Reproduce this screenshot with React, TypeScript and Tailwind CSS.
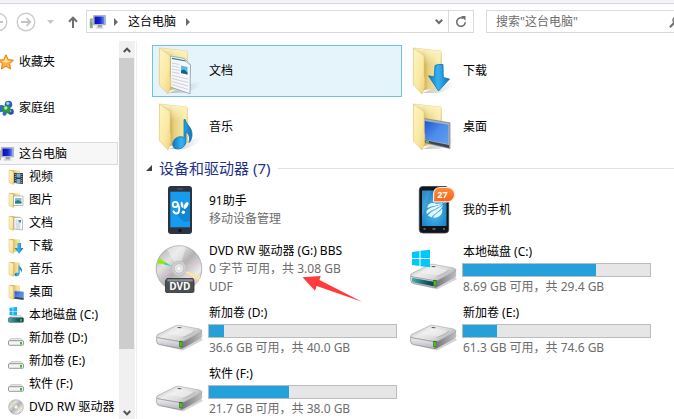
import type { ReactNode } from "react"

type Kind = "video" | "picture" | "document" | "download" | "music" | "desktop"

// Shared gradients, referenced by id from every icon
function IconDefs() {
  return (
    <svg className="absolute size-0" aria-hidden="true">
      <defs>
        <linearGradient id="flap" x1="0" x2="1" y1="0" y2="1">
          <stop offset="0" stopColor="#fdf5c4" />
          <stop offset="0.6" stopColor="#fae9a2" />
          <stop offset="1" stopColor="#ecd07a" />
        </linearGradient>
        <linearGradient id="back" x1="0" x2="1" y1="0" y2="0">
          <stop offset="0.36" stopColor="#c8a850" />
          <stop offset="0.52" stopColor="#e6cf7c" />
          <stop offset="0.85" stopColor="#f5e8a2" />
          <stop offset="1" stopColor="#eddc8c" />
        </linearGradient>
        <linearGradient id="backTop" x1="0" x2="0" y1="0" y2="1">
          <stop offset="0" stopColor="#fdf6c6" />
          <stop offset="0.4" stopColor="#fdf6c6" stopOpacity="0" />
        </linearGradient>
        <linearGradient id="blue" x1="0" x2="1" y1="0" y2="0">
          <stop offset="0" stopColor="#1076be" />
          <stop offset="0.45" stopColor="#35b2f2" />
          <stop offset="1" stopColor="#1273b8" />
        </linearGradient>
        <linearGradient id="screen" x1="0" x2="1" y1="0" y2="1">
          <stop offset="0" stopColor="#1f55cc" />
          <stop offset="0.5" stopColor="#4c8cec" />
          <stop offset="1" stopColor="#5f9ff0" />
        </linearGradient>
        <linearGradient id="pc" x1="0" x2="1" y1="0" y2="0">
          <stop offset="0" stopColor="#0a12a8" />
          <stop offset="0.55" stopColor="#1626d8" />
          <stop offset="1" stopColor="#6f8cf5" />
        </linearGradient>
        <linearGradient id="metal" x1="0" x2="1" y1="0" y2="0.6">
          <stop offset="0" stopColor="#a4a4a6" />
          <stop offset="0.4" stopColor="#ececec" />
          <stop offset="0.7" stopColor="#dcdcdd" />
          <stop offset="1" stopColor="#a9a9ab" />
        </linearGradient>
        <linearGradient id="front" x1="0" x2="0" y1="0" y2="1">
          <stop offset="0" stopColor="#f4f4f8" />
          <stop offset="1" stopColor="#b4b4bc" />
        </linearGradient>
        <linearGradient id="side" x1="0" x2="1" y1="0" y2="0">
          <stop offset="0" stopColor="#6e6e72" />
          <stop offset="1" stopColor="#c0c0c4" />
        </linearGradient>
        <linearGradient id="teal" x1="0" x2="1" y1="0" y2="0">
          <stop offset="0" stopColor="#4cb0a4" />
          <stop offset="0.6" stopColor="#15616f" />
          <stop offset="1" stopColor="#123f4a" />
        </linearGradient>
        <linearGradient id="disc" x1="0" x2="1" y1="0" y2="1">
          <stop offset="0" stopColor="#a4a4a4" />
          <stop offset="0.3" stopColor="#e2e2e2" />
          <stop offset="0.5" stopColor="#b2b2b2" />
          <stop offset="0.75" stopColor="#ececec" />
          <stop offset="1" stopColor="#a0a0a0" />
        </linearGradient>
        <radialGradient id="phone" cx="0.5" cy="0.6" r="0.7">
          <stop offset="0" stopColor="#4cc0f6" />
          <stop offset="1" stopColor="#1478bd" />
        </radialGradient>
        <linearGradient id="badge" x1="0" x2="0" y1="0" y2="1">
          <stop offset="0" stopColor="#ff8a3a" />
          <stop offset="1" stopColor="#f8641a" />
        </linearGradient>
        <linearGradient id="shadow" x1="0" x2="1" y1="0" y2="0">
          <stop offset="0" stopColor="#8a8a8a" stopOpacity="0.5" />
          <stop offset="1" stopColor="#8a8a8a" stopOpacity="0" />
        </linearGradient>
      </defs>
    </svg>
  )
}

function FolderIcon({ kind }: { kind: Kind }) {
  return (
    <svg viewBox="0 0 48 48" className="size-12 shrink-0" aria-hidden="true">
      <path d="M14 46 L32 38 L46 34 L44 40 L30 46 Z" fill="url(#shadow)" />
      <path d="M4.500 1 L31.500 4 Q32.500 4.200 32.500 5.500 V40 L15 43 Z" fill="url(#back)" stroke="#dfc674" strokeWidth="0.6" />
      <path d="M4.500 1 L31.500 4 Q32.500 4.200 32.500 5.500 V40 L15 43 Z" fill="url(#backTop)" />
      <path d="M29 6.500 L31 7 V38 L29 38.500 Z" fill="#fcf3ba" opacity="0.6" />
      {kind === "document" && (
        <g>
          <path d="M15.500 9 L29.500 11.500 L35.500 18 L35 46.800 L15.500 40 Z" fill="#f6f7fb" stroke="#8f98a8" strokeWidth="0.8" />
          <path d="M17 11.300 L31 14" stroke="#2b7f86" strokeWidth="1.200" />
          <path d="M26 18.500 L32.500 20 V27.500 L26 26 Z" fill="#5cbbe4" />
          <path d="M26 23.500 L29 22.500 L32.500 25.500 V27.500 L26 26 Z" fill="#17608c" />
          <path
            d="M17 16 l7.500 1.500 M17 19 l7.500 1.500 M17 22 l7.500 1.500 M17 25 l7.500 1.500 M17 28.500 l16 3.500 M17 31.500 l16 4 M17 34.500 l16 4.500 M17 37.500 l16 5"
            stroke="#cfd1d8"
            strokeWidth="1"
          />
          <path d="M29.500 11.500 Q30.500 16 35.500 18" fill="#dfe3ea" stroke="#8f98a8" strokeWidth="0.5" />
        </g>
      )}
      {kind === "desktop" && (
        <g>
          <path d="M15 15.500 L41 19.800 V45.500 L15 39.500 Z" fill="#a9aeb8" stroke="#747c8a" strokeWidth="0.7" />
          <path d="M15.500 18 L39.300 21.800 V41 L15.500 36.500 Z" fill="url(#screen)" />
          <path d="M15.500 37 L40 42 V45 L15.500 39.300 Z" fill="#3e4654" />
          <path d="M17 37.800 l3 0.700 v1.400 l-3 -0.700 Z" fill="#7ec94b" />
        </g>
      )}
      <path d="M4.500 1 L14.500 8 Q15.200 8.600 15.200 10 V29.500 L15.800 31 V40 L13 47 L5 38.500 Q4.300 37.800 4.300 36.500 Z" fill="url(#flap)" stroke="#dcc06c" strokeWidth="0.6" />
      {kind === "download" && (
        <path
          d="M26 18.500 Q29 16.800 34 17.500 L34.300 30.500 L40.500 32 L29.500 44 L19.500 28.800 L25.200 30 Z"
          fill="url(#blue)"
          stroke="#1272b4"
          strokeWidth="0.8"
          strokeLinejoin="round"
        />
      )}
      {kind === "music" && (
        <path
          d="M29 16.500 H30.200 C31 21.500 37.500 24.500 37 32 C36.800 35.500 35.800 38 34 39.500 C35 34.500 34.500 31 31 29 V37.500 C31 43 27 46 22.500 46 C18.500 46 16.800 42.500 18.300 38.500 C20 34.500 25 32.500 29 34.500 Z"
          fill="url(#blue)"
          stroke="#1470ac"
          strokeWidth="0.8"
        />
      )}
    </svg>
  )
}

function SmallFolderIcon({ kind }: { kind: Kind }) {
  return (
    <svg viewBox="0 0 16 16" className="size-4 shrink-0" aria-hidden="true">
      <path d="M1 1 L12 1.500 V13 L5 14.500 Z" fill="url(#back)" />
      <path d="M1 1 L5.500 2.500 V15.500 L1 13.500 Z" fill="url(#flap)" stroke="#d9bd68" strokeWidth="0.5" />
      {kind === "video" && (
        <g>
          <path d="M6 4 H15 V15 L6 14 Z" fill="#33383e" />
          <path d="M8.500 4.500 H12.500 V8.500 H8.500 Z M8.500 10 H12.500 V14 H8.500 Z" fill="#6fb0de" />
          <path d="M7.200 5 V14 M13.800 5 V15" stroke="#dfe3e8" strokeWidth="0.8" strokeDasharray="1 1" />
        </g>
      )}
      {kind === "picture" && (
        <g>
          <path d="M5.500 4 H15 V13.500 H5.500 Z" fill="#fff" stroke="#8b9298" strokeWidth="0.6" />
          <path d="M7 6 H13.500 V11.500 H7 Z" fill="#79bde6" />
          <path d="M7 9.500 L10 8 L13.500 10 V11.500 H7 Z" fill="#2d7f62" />
        </g>
      )}
      {kind === "document" && (
        <g>
          <path d="M6 2.500 H12.500 L14.500 4.500 V15 L6 14 Z" fill="#fff" stroke="#8f949c" strokeWidth="0.6" />
          <path d="M7.500 5 h2 M7.500 7 h2 M7.500 9 h5 M7.500 11 h5 M7.500 13 h5" stroke="#9aa0aa" strokeWidth="0.7" />
          <path d="M10.500 5 H13 V7.500 H10.500 Z" fill="#2c8fd6" />
        </g>
      )}
      {kind === "download" && <path d="M9.500 5 H13 V10 H15.500 L11.200 15.800 L6.500 10 H9.500 Z" fill="url(#blue)" />}
      {kind === "music" && (
        <path d="M10.500 3 C11 6 15.500 7 13.500 12 C13.500 9.500 12.500 9 11.500 8.500 V13 C11 16 6.500 16 6.500 13.800 C6.500 12 9 11.500 10.300 12 Z" fill="url(#blue)" />
      )}
      {kind === "desktop" && (
        <g>
          <path d="M6.500 7 L15.500 8 V15.500 L6.500 14.500 Z" fill="url(#screen)" stroke="#9199a6" strokeWidth="0.6" />
          <path d="M6.500 13 L15.500 14 V15.700 L6.500 14.700 Z" fill="#3b4350" />
        </g>
      )}
    </svg>
  )
}

function ComputerIcon() {
  return (
    <svg viewBox="0 0 18 16" className="h-4 w-4.5 shrink-0" aria-hidden="true">
      <path d="M1 5 L3.500 4.500 V14 H1 Z" fill="#a9b0a9" stroke="#7d857d" strokeWidth="0.4" />
      <path d="M1.500 8 H3 V12 H1.500 Z" fill="#48c13c" />
      <path d="M4.500 1.500 H16.500 V11 H4.500 Z" fill="#c9cdd4" stroke="#8f959e" strokeWidth="0.6" />
      <path d="M5.500 2.500 H15.500 V10 H5.500 Z" fill="url(#pc)" />
      <path d="M9 11 H12.500 L13.500 13.500 H8 Z" fill="#9a9fa7" />
      <path d="M6.500 13.500 H14.500 V14.500 H6.500 Z" fill="#c3c6cb" />
    </svg>
  )
}

function StarIcon() {
  return (
    <svg viewBox="0 0 16 16" className="size-4 shrink-0" aria-hidden="true">
      <path
        d="M8 0.800 L10.200 5.600 L15.500 6.200 L11.600 9.800 L12.700 15 L8 12.300 L3.300 15 L4.400 9.800 L0.500 6.200 L5.800 5.600 Z"
        fill="#fcb040"
        stroke="#e8700f"
        strokeWidth="0.9"
        strokeLinejoin="round"
      />
      <path d="M8 3 L9.500 6.500 L13 7 L8 9 L4 7 L6.500 6.500 Z" fill="#fde08c" />
    </svg>
  )
}

function HomegroupIcon() {
  return (
    <svg viewBox="0 0 16 16" className="size-4 shrink-0" aria-hidden="true">
      <circle cx="10.500" cy="4.500" r="3.800" fill="#2c62b8" />
      <circle cx="9.800" cy="3.300" r="1.600" fill="#a9cdf2" />
      <circle cx="3.500" cy="8.500" r="3.500" fill="#2d6cc0" />
      <circle cx="12.800" cy="11.800" r="3" fill="#254fb0" />
      <circle cx="12.200" cy="11" r="1.200" fill="#93b8ee" />
      <circle cx="8.500" cy="9.500" r="4" fill="#2a9b35" />
      <circle cx="7.800" cy="8" r="1.700" fill="#b4ecae" />
      <circle cx="6.500" cy="13.800" r="2" fill="#2d6cc0" />
    </svg>
  )
}

function SmallDriveIcon({ system = false }: { system?: boolean }) {
  return (
    <svg viewBox="0 0 16 16" className="size-4 shrink-0" aria-hidden="true">
      {system && (
        <path d="M1.500 0.800 L4.700 0.400 V4 H1.500 Z M5.300 0.300 L9 0 V4 H5.300 Z M1.500 4.600 H4.700 V8.300 L1.500 7.900 Z M5.300 4.600 H9 V8.800 L5.300 8.400 Z" fill="#12b7ee" />
      )}
      <path d="M3 8.500 H13 L15.500 11.500 H0.500 Z" fill="#e4e4e6" stroke="#a5a5aa" strokeWidth="0.4" />
      <rect
        x="0.500"
        y="10.700"
        width="15"
        height="4.600"
        rx="1"
        fill={system ? "url(#teal)" : "#f4f4f6"}
        stroke={system ? "#58707a" : "#7d7d84"}
        strokeWidth="0.8"
      />
      <path d="M12 12 H14 V14.500 H12 Z" fill="#2fbf21" />
    </svg>
  )
}

function SmallDiscIcon() {
  return (
    <svg viewBox="0 0 16 16" className="size-4 shrink-0" aria-hidden="true">
      <circle cx="8" cy="8" r="7.300" fill="url(#disc)" stroke="#8d8d8d" strokeWidth="0.5" />
      <path d="M8 8 L1.500 5 A7 7 0 0 1 3 3 Z" fill="#c5e8a0" />
      <path d="M8 8 L14.500 11 A7 7 0 0 1 13 13 Z" fill="#efe3b0" />
      <circle cx="8" cy="8" r="2.200" fill="#e9e9e9" stroke="#a5a5a5" strokeWidth="0.5" />
      <circle cx="8" cy="8" r="0.900" fill="#fff" />
    </svg>
  )
}

function DriveIcon({ system = false }: { system?: boolean }) {
  return (
    <svg viewBox="0 0 48 48" className="size-12 shrink-0" aria-hidden="true">
      <path d="M4 38.500 L28 44.500 L48 34 L45 31 Z" fill="#555" opacity="0.25" />
      <path d="M25 35 L47 26 Q47.800 30 46.500 32 L29 41.800 Q27 43 25 42.500 Z" fill="url(#side)" />
      <path d="M2.500 28.500 L20 20 Q22 19 24.500 19.300 L44.500 23 Q48.500 24.300 46.500 26.500 L29.500 35 Q27 36.200 24.500 35.600 L3 31.800 Q0.500 30.500 2.500 28.500 Z" fill="url(#metal)" stroke="#96969a" strokeWidth="0.5" />
      <path d="M12 28 L24.500 22.500 L39 25 L29.500 30.500 Z" fill="#fff" opacity="0.35" />
      <path d="M28 31.500 Q36 29 40 25" fill="none" stroke="#a2a2a6" strokeWidth="0.6" />
      <path d="M23.500 21 l3.500 0.600 l-1.500 0.700 l-3.500 -0.600 Z" fill="#4c4c4e" />
      <path d="M1.700 30.800 Q2.200 31.800 4 32 L24.500 35.600 Q26.500 36 28 35.700 V42 Q26.500 43 24.500 42.500 L4.500 38.600 Q1.800 38 1.700 35.500 Z" fill="url(#front)" stroke="#7d7d83" strokeWidth="0.6" />
      {system && <path d="M3 32.800 L24.500 36.700 V41.300 L5 37.500 Q3 37 3 35.300 Z" fill="url(#teal)" />}
      <path d="M24.700 35.300 L27.200 35.700 V41.300 L24.700 40.800 Z" fill="#4be01a" stroke="#1f3f1a" strokeWidth="0.7" />
      {system && (
        <path d="M3 7 L10.500 6 V13 H3 Z M11.500 5.800 L21 4.800 V13 H11.500 Z M3 14 H10.500 V21 L3 20 Z M11.500 14 H21 V22.300 L11.500 21.200 Z" fill="#00c8fb" />
      )}
    </svg>
  )
}

function DvdIcon() {
  return (
    <svg viewBox="0 0 48 48" className="size-12 shrink-0" aria-hidden="true">
      <circle cx="24" cy="23.500" r="22.800" fill="url(#disc)" stroke="#8b8b8b" strokeWidth="0.6" />
      <path d="M24 24 L12 4.500 A23 23 0 0 1 31 2.200 Z" fill="#fff" opacity="0.4" />
      <path d="M14 19.500 L2.500 18.500 A22 22 0 0 1 4.500 13.500 Z" fill="#8bf000" />
      <path d="M18 21.500 L10 17.500 L9 19.500 Z" fill="#35d2c0" />
      <path d="M24 24 L46 17 L45.500 15.500 Z" fill="#f0b6e4" />
      <path d="M24 24 L2.500 31 L3 32.500 Z" fill="#f0b6e4" />
      <path d="M24 24 L45.500 31 L43.500 35.500 Z" fill="#f3e9a6" />
      <path d="M24 24 L43.500 35.500 L42 38 Z" fill="#f5c4d8" />
      <circle cx="24" cy="23.500" r="7.500" fill="#cfcfcf" stroke="#b2b2b2" strokeWidth="0.6" />
      <circle cx="24" cy="23.500" r="4.800" fill="#e8e8e8" stroke="#aaa" strokeWidth="0.6" />
      <circle cx="24" cy="23.500" r="2.200" fill="#fff" stroke="#bbb" strokeWidth="0.5" />
      <path d="M12 33.500 H38 L39 36 V46 Q39 47.500 37.500 47.500 H12 Q10.500 47.500 10.500 46 V36 Z" fill="#4b4e50" stroke="#2f3133" strokeWidth="0.8" />
      <path d="M12.500 34.300 H37.500 L38 36.500 H12 Z" fill="#8e9193" />
      <text x="24.800" y="45.300" textAnchor="middle" fontSize="10" fontWeight="700" fill="#fff" fontFamily="Open Sans, sans-serif">
        DVD
      </text>
    </svg>
  )
}

function AssistantPhoneIcon() {
  return (
    <svg viewBox="0 0 48 48" className="size-12 shrink-0" aria-hidden="true">
      <rect x="13" y="0" width="24" height="48" rx="3" fill="#2d3440" />
      <rect x="15.300" y="5.700" width="19.700" height="35.600" fill="#169bee" />
      <path d="M21 28 L32 17 L35 20 V35 L29 36 Z" fill="#0f86d3" />
      <rect x="22" y="2.500" width="6" height="1" rx="0.500" fill="#566070" />
      <circle cx="25" cy="44.600" r="1.700" fill="#11151b" />
      <ellipse cx="20.300" cy="18.500" rx="2.600" ry="2.600" fill="none" stroke="#fff" strokeWidth="1.900" />
      <path d="M23 18.500 C25 22 24.500 27.500 21.500 27.500 C20 27.500 19 26.500 18.500 25.500" fill="none" stroke="#fff" strokeWidth="2" strokeLinecap="round" />
      <ellipse cx="31" cy="19.500" rx="1.800" ry="3.800" fill="#fff" transform="rotate(28 31 19.500)" />
      <ellipse cx="27" cy="18.800" rx="1.200" ry="3" fill="#fff" transform="rotate(-12 27 18.800)" />
      <circle cx="28.300" cy="26.300" r="1.700" fill="#fff" />
    </svg>
  )
}

function MyPhoneIcon() {
  return (
    <svg viewBox="0 0 48 48" className="size-12 shrink-0" aria-hidden="true">
      <rect x="10.300" y="0.500" width="29.400" height="46.500" rx="3.500" fill="#11151a" stroke="#39424b" strokeWidth="0.8" />
      <rect x="13" y="4.500" width="24.500" height="35.500" fill="url(#phone)" />
      <path d="M13 4.500 H22 L13 32 Z" fill="#fff" opacity="0.12" />
      <g fill="#eaf8ff">
        <path d="M18.500 22 C18 17.500 24 15.500 27.500 18 L34 17 C29 20 23 19.500 18.500 22 Z" />
        <path d="M17.300 25.500 C20 21 28 20.500 34 17.800 C30 22.500 22 23.500 18 28 Z" />
        <path d="M19 29.500 C22 25 29 23.500 34 18.800 C32 25.500 25 27 22.500 31.200 Z" />
        <path d="M24 31.500 C26 28 31 26 33 22.500 C34.500 27.500 30.500 32.500 24 31.500 Z" />
      </g>
      <path d="M14.500 43 h2 M23.500 43 h3 M34 43 h2" stroke="#9aa4ad" strokeWidth="1.200" />
      <path
        d="M31 1.500 H38.500 A7 7 0 0 1 38.500 15.800 H25.500 Q24 15.800 24.600 13.500 V8 Q25 1.500 31 1.500 Z"
        fill="url(#badge)"
        stroke="#f7e6dc"
        strokeWidth="1.200"
      />
      <text x="33.500" y="12" textAnchor="middle" fontSize="9" fontWeight="700" fill="#fff" fontFamily="Open Sans, sans-serif">
        27
      </text>
    </svg>
  )
}

function Breadcrumb() {
  return (
    <svg viewBox="0 0 4 8" className="h-2 w-1 shrink-0" aria-hidden="true">
      <path d="M0 0 L4 4 L0 8 Z" fill="#6a6a6a" />
    </svg>
  )
}

function CircleArrow({ flip = false }: { flip?: boolean }) {
  return (
    <svg viewBox="0 0 20 20" className={flip ? "size-5 rotate-180" : "size-5"} aria-hidden="true">
      <circle cx="10" cy="10" r="8.800" fill="none" stroke="#cbcbcb" strokeWidth="1.400" />
      <path d="M5 10 H14 M10.500 6.200 L14.300 10 L10.500 13.800" fill="none" stroke="#c4c4c4" strokeWidth="1.800" />
    </svg>
  )
}

const sidebarItems: { label: string; icon: ReactNode }[] = [
  { label: "视频", icon: <SmallFolderIcon kind="video" /> },
  { label: "图片", icon: <SmallFolderIcon kind="picture" /> },
  { label: "文档", icon: <SmallFolderIcon kind="document" /> },
  { label: "下载", icon: <SmallFolderIcon kind="download" /> },
  { label: "音乐", icon: <SmallFolderIcon kind="music" /> },
  { label: "桌面", icon: <SmallFolderIcon kind="desktop" /> },
  { label: "本地磁盘 (C:)", icon: <SmallDriveIcon system /> },
  { label: "新加卷 (D:)", icon: <SmallDriveIcon /> },
  { label: "新加卷 (E:)", icon: <SmallDriveIcon /> },
  { label: "软件 (F:)", icon: <SmallDriveIcon /> },
  { label: "DVD RW 驱动器", icon: <SmallDiscIcon /> },
]

const folders: { label: string; kind: Kind }[] = [
  { label: "文档", kind: "document" },
  { label: "下载", kind: "download" },
  { label: "音乐", kind: "music" },
  { label: "桌面", kind: "desktop" },
]

function Header() {
  return (
    <header className="-mr-3 flex h-[37px] items-start pt-1.5">
      <div className="-ml-3 flex h-6 items-center">
        <button type="button" aria-label="后退">
          <CircleArrow flip />
        </button>
        <button type="button" aria-label="前进" className="ml-2">
          <CircleArrow />
        </button>
        <button type="button" aria-label="最近位置" className="ml-[11px]">
          <svg viewBox="0 0 7 4" className="h-1 w-[7px]" aria-hidden="true">
            <path d="M0 0 H7 L3.500 4 Z" fill="#c8c8c8" />
          </svg>
        </button>
        <button type="button" aria-label="上移" className="ml-3.5">
          <svg viewBox="0 0 10 12" className="h-3 w-2.5" aria-hidden="true">
            <path d="M5 12 V2 M1 5.800 L5 1.600 L9 5.800" fill="none" stroke="#6e6e6e" strokeWidth="2" />
          </svg>
        </button>
      </div>
      <div className="ml-2 flex h-[23px] flex-1 items-center border border-[#d9d9d9] pl-0.5">
        <ComputerIcon />
        <span className="ml-[7px] flex items-center gap-2.5">
          <Breadcrumb />
          <a href="#computer">这台电脑</a>
          <Breadcrumb />
        </span>
        <button type="button" aria-label="历史记录" className="mr-[5px] ml-auto">
          <svg viewBox="0 0 8 6" className="h-1.5 w-2" aria-hidden="true">
            <path d="M0.800 0.800 L4 4 L7.200 0.800" fill="none" stroke="#6a6a6a" strokeWidth="2" />
          </svg>
        </button>
        <button type="button" aria-label="刷新" className="flex h-full w-[25px] items-center justify-center border-l border-[#d9d9d9]">
          <svg viewBox="0 0 12 12" className="size-3" aria-hidden="true">
            <path d="M8.200 2.400 A4.300 4.300 0 1 0 10.300 6.200" fill="none" stroke="#6e6e6e" strokeWidth="1.600" />
            <path d="M6 0 H10.500 V4.800 Z" fill="#6e6e6e" />
          </svg>
        </button>
      </div>
      <label className="ml-3 flex h-[23px] w-[200px] items-center border border-[#d9d9d9] pr-1 pl-[9px]">
        <input
          type="search"
          aria-label="搜索"
          placeholder={'搜索"这台电脑"'}
          className="min-w-0 flex-1 outline-none placeholder:text-[#6d6d6d]"
        />
        <svg viewBox="0 0 12 12" className="size-3 shrink-0" aria-hidden="true">
          <circle cx="7.500" cy="4.500" r="3.500" fill="none" stroke="#6e6e6e" strokeWidth="1.400" />
          <path d="M5 7 L0.800 11.200" stroke="#6e6e6e" strokeWidth="2" />
        </svg>
      </label>
    </header>
  )
}

function Sidebar() {
  return (
    <nav className="w-[119px] shrink-0 overflow-hidden pt-[9px] whitespace-nowrap">
      <a href="#favorites" className="-ml-0.5 flex h-[23px] items-center gap-[5px]">
        <StarIcon />
        收藏夹
      </a>
      <a href="#homegroup" className="mt-[23px] -ml-0.5 flex h-[23px] items-center gap-[5px]">
        <HomegroupIcon />
        家庭组
      </a>
      <a
        href="#computer"
        className="mt-[23px] mr-px -ml-1 flex h-[23px] items-center gap-1 border border-[#dadada] bg-[#f7f7f7]"
      >
        <ComputerIcon />
        这台电脑
      </a>
      {sidebarItems.map((item) => (
        <a key={item.label} href="#item" className="flex h-[23px] items-center gap-[5px] pl-2">
          {item.icon}
          {item.label}
        </a>
      ))}
    </nav>
  )
}

function Scrollbar() {
  return (
    <div className="flex w-4 shrink-0 flex-col bg-[#f0f0f0]">
      <button type="button" aria-label="向上滚动" className="flex h-[17px] items-center justify-center">
        <svg viewBox="0 0 8 6" className="h-1.5 w-2" aria-hidden="true">
          <path d="M0.800 5 L4 1.600 L7.200 5" fill="none" stroke="#505050" strokeWidth="2" />
        </svg>
      </button>
      <div className="mr-px flex-1">
        <div className="h-5/6 bg-[#cdcdcd]" />
      </div>
      <button type="button" aria-label="向下滚动" className="flex h-3 items-center justify-center">
        <svg viewBox="0 0 8 6" className="h-1.5 w-2" aria-hidden="true">
          <path d="M0.800 1 L4 4.400 L7.200 1" fill="none" stroke="#505050" strokeWidth="2" />
        </svg>
      </button>
    </div>
  )
}

function Tile({ icon, title, children }: { icon: ReactNode; title: string; children?: ReactNode }) {
  return (
    <div className="relative flex min-h-[53px] items-center gap-[5px] pb-px pl-[3px] leading-[18px]">
      {icon}
      <div className="min-w-0 flex-1">
        <p className="pl-px">{title}</p>
        {children}
      </div>
    </div>
  )
}

function Detail({ children }: { children: ReactNode }) {
  return (
    <p className="pl-px font-['Noto_Sans','Noto_Sans_CJK_SC',sans-serif] text-[#6d6d6d]">{children}</p>
  )
}

function Drive({ title, used, detail, system }: { title: string; used: number; detail: string; system?: boolean }) {
  return (
    <div className="flex h-[58px] items-center gap-[5px] pl-[3px] leading-[18px]">
      <DriveIcon system={system} />
      <div className="min-w-0 flex-1">
        <p className="pl-px">{title}</p>
        <div className="mt-0.5 mr-[5px] mb-px h-3.5 border border-[#bcbcbc] bg-[#e6e6e6]">
          <div className="h-full bg-[#26a0da]" style={{ width: `${used}%` }} />
        </div>
        <Detail>{detail}</Detail>
      </div>
    </div>
  )
}

export default function App() {
  return (
    <div className="flex h-screen flex-col overflow-hidden bg-white font-['Noto_Sans','Noto_Sans_CJK_SC',sans-serif] text-xs text-black">
      <IconDefs />
      <div className="h-1 shrink-0 border-b border-[#d6d8db] bg-[#f3f4f7]" />
      <Header />
      <div className="flex min-h-0 flex-1">
        <Sidebar />
        <Scrollbar />
        <main className="ml-px min-w-0 flex-1 overflow-hidden border-l border-[#f0f0f0] pt-1 pl-[15px]">
          <div className="grid grid-cols-[repeat(auto-fill,250px)] gap-1">
            {folders.map((folder, i) => (
              <a
                key={folder.label}
                href="#folder"
                className={`flex h-[52px] items-center gap-1.5 border pl-0.5 ${
                  i === 0 ? "border-[#70c0e7] bg-[#e5f3fb]" : "border-transparent"
                }`}
              >
                <FolderIcon kind={folder.kind} />
                {folder.label}
              </a>
            ))}
          </div>

          <h2 className="-ml-1.5 flex h-[31px] items-center pb-px text-[15px] text-[#1e3287]">
            <svg viewBox="0 0 6 6" className="mr-[7px] size-1.5" aria-hidden="true">
              <path d="M6 0 V6 H0 Z" fill="#404040" />
            </svg>
            设备和驱动器 (7)
            <span className="ml-2 h-px flex-1 bg-[#e2e2e2]" />
          </h2>

          <div className="grid grid-cols-[repeat(auto-fill,250px)] gap-x-1 gap-y-[3px]">
            <Tile icon={<AssistantPhoneIcon />} title="91助手">
              <Detail>移动设备管理</Detail>
            </Tile>
            <Tile icon={<MyPhoneIcon />} title="我的手机" />
            <Tile icon={<DvdIcon />} title="DVD RW 驱动器 (G:) BBS">
              <Detail>0 字节 可用，共 3.08 GB</Detail>
              <Detail>UDF</Detail>
              <svg viewBox="0 0 60 26" className="absolute top-9 left-[150px] h-[26px] w-[60px]" aria-hidden="true">
                <path d="M0.500 1.300 L18.700 0 L17.500 4 L60 25.700 L14.700 10 L13 14.700 Z" fill="#ff3b3b" />
              </svg>
            </Tile>
            <Drive title="本地磁盘 (C:)" used={71} detail="8.69 GB 可用，共 29.4 GB" system />
            <Drive title="新加卷 (D:)" used={8} detail="36.6 GB 可用，共 40.0 GB" />
            <Drive title="新加卷 (E:)" used={18} detail="61.3 GB 可用，共 74.6 GB" />
            <Drive title="软件 (F:)" used={43} detail="21.7 GB 可用，共 38.0 GB" />
          </div>
        </main>
      </div>
    </div>
  )
}
